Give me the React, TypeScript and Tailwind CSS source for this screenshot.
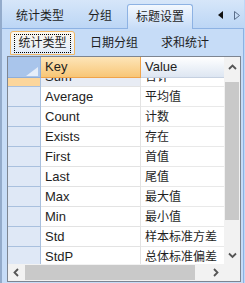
import React from "react";

const rows: [string, string][] = [
  ["Sum", "合计"],
  ["Average", "平均值"],
  ["Count", "计数"],
  ["Exists", "存在"],
  ["First", "首值"],
  ["Last", "尾值"],
  ["Max", "最大值"],
  ["Min", "最小值"],
  ["Std", "样本标准方差"],
  ["StdP", "总体标准偏差"],
];

function Chevron({ dir }: { dir: "up" | "down" | "left" | "right" }) {
  const pts = {
    up: "1,5 4.5,1.5 8,5",
    down: "1,1.5 4.5,5 8,1.5",
    left: "5,1 1.5,4.5 5,8",
    right: "2,1 5.5,4.5 2,8",
  }[dir];
  const vertical = dir === "up" || dir === "down";
  return (
    <svg width={vertical ? 9 : 7} height={vertical ? 7 : 9} viewBox={vertical ? "0 0 9 7" : "0 0 7 9"}>
      <polyline points={pts} fill="none" stroke="#555" strokeWidth="1.8" />
    </svg>
  );
}

export default function App() {
  const font = { fontFamily: '"Liberation Sans", "Noto Sans CJK SC", sans-serif' };
  return (
    <div
      className="w-[245px] h-[283px] overflow-hidden flex flex-col bg-[#bfd8f7] border-l-2 border-[#93abcb] pr-px text-[#1e1e1e]"
      style={font}
    >
      {/* outer tabs */}
      <div className="h-[29px] flex items-stretch pt-[4px] border-b border-[#8db2e3] bg-gradient-to-b from-[#d6e6f9] to-[#bcd6f5] text-[12px]">
        <div className="ml-[14px] flex items-center">统计类型</div>
        <div className="ml-[24px] flex items-center">分组</div>
        <div className="ml-[15px] w-[66px] -mb-px flex items-center justify-center rounded-t-[3px] border border-b-0 border-[#8db2e3] bg-gradient-to-b from-[#f3f8fe] to-[#c6dcf7]">
          标题设置
        </div>
        <div className="ml-auto mr-[4px] flex items-center gap-[10px] pb-[2px]">
          <svg width="6" height="8" viewBox="0 0 6 8">
            <polygon points="5,0 0,4 5,8" fill="#111" />
          </svg>
          <svg width="6" height="9" viewBox="0 0 6 9">
            <polygon points="0.5,0.5 5.5,4.5 0.5,8.5" fill="none" stroke="#5a6e8a" strokeWidth="1" />
          </svg>
        </div>
      </div>

      {/* page */}
      <div className="flex-1 flex flex-col bg-[#c6dcf7] border-r border-[#8db2e3] pl-[5px] pr-[2px] pb-px">
        {/* inner tabs */}
        <div className="h-[27px] pt-[2px] pb-px flex items-stretch text-[12px]">
          <div className="ml-[3px] w-[65px] flex items-center justify-center rounded-t-[3px] border border-[#f0b765] bg-gradient-to-b from-[#fdf8ee] to-[#e2edfb]">
            <span className="border border-dotted border-black px-[3px] leading-[15px] py-px">统计类型</span>
          </div>
          <div className="ml-[15px] flex items-center">日期分组</div>
          <div className="ml-[23px] flex items-center">求和统计</div>
        </div>

        {/* grid */}
        <div className="flex-1 flex flex-col border border-[#7d8591] bg-white text-[13px]">
          <div className="flex h-[207px]">
            <div className="flex-1 flex flex-col">
              {/* header */}
              <div className="h-[21px] flex">
                <div className="w-[33px] bg-[#a9c5eb] border-r border-b border-[#8faed8] flex items-end justify-end pr-[2px] pb-[1px]">
                  <svg width="12" height="9" viewBox="0 0 12 9">
                    <polygon points="12,0 12,9 0,9" fill="#e6eef9" />
                  </svg>
                </div>
                <div className="w-[100px] border-r border-b border-[#f0a34a] bg-gradient-to-b from-[#fde5b8] to-[#f8c676] pl-[4px] flex items-center">
                  Key
                </div>
                <div className="flex-1 border-b border-[#c5d0e0] bg-gradient-to-b from-white to-[#dde6f2] pl-[4px] flex items-center">
                  Value
                </div>
              </div>
              {/* rows */}
              <div className="flex-1 overflow-hidden">
                <div className="-mt-[11px]">
                  {rows.map(([k, v], i) => (
                    <div key={k} className="h-[20px] flex">
                      <div
                        className={`w-[33px] border-r border-b border-[#a9c0de] ${i === 0 ? "bg-[#fcd69c]" : "bg-[#dfe8f6]"}`}
                      />
                      <div
                        className={`w-[100px] border-r border-b border-[#e3e3e3] pl-[4px] flex items-center ${i === 0 ? "bg-[#e8ecf4]" : ""}`}
                      >
                        {k}
                      </div>
                      <div className="flex-1 border-b border-[#e9e9e9] pl-[4px] flex items-center text-[12px]">{v}</div>
                    </div>
                  ))}
                </div>
              </div>
            </div>
            {/* vertical scrollbar */}
            <div className="w-[16px] flex flex-col bg-[#f2f2f2]">
              <div className="h-[20px] flex items-center justify-center">
                <Chevron dir="up" />
              </div>
              <div className="mt-[5px] h-[138px] mx-px bg-[#c9c9c9]" />
              <div className="flex-1" />
              <div className="h-[18px] flex items-center justify-center">
                <Chevron dir="down" />
              </div>
            </div>
          </div>
          {/* horizontal scrollbar */}
          <div className="h-[17px] flex bg-[#f2f2f2]">
            <div className="w-[17px] flex items-center justify-center">
              <Chevron dir="left" />
            </div>
            <div className="w-[170px] my-px bg-[#c9c9c9]" />
            <div className="flex-1" />
            <div className="w-[17px] flex items-center justify-center">
              <Chevron dir="right" />
            </div>
            <div className="w-[16px]" />
          </div>
        </div>
      </div>
    </div>
  );
}
